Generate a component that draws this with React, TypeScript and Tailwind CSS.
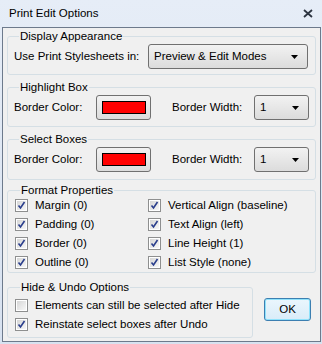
import React from 'react';

const font = { fontFamily: '"Liberation Sans", Arial, sans-serif' };

const Arrow = () => (
  <svg width="7" height="4" viewBox="0 0 7 4" className="shrink-0">
    <path d="M0 0H7L3.5 4Z" fill="#000" />
  </svg>
);

const Select = ({ value, className }: { value: string; className: string }) => (
  <div
    className={`h-[25px] flex items-center justify-between pl-[5px] pr-[9px] rounded-[3px] border border-[#707070] bg-gradient-to-b from-[#f2f2f2] to-[#dcdcdc] ${className}`}
  >
    <span>{value}</span>
    <Arrow />
  </div>
);

const ColorButton = () => (
  <div className="w-[55px] h-[25px] flex items-center justify-center rounded-[3px] border border-[#707070] bg-gradient-to-b from-[#f2f2f2] to-[#dcdcdc]">
    <div className="w-[44px] h-[13px] bg-[#ff0000] border border-black" />
  </div>
);

const Check = ({ checked = true }: { checked?: boolean }) => (
  <div className="w-[13px] h-[13px] border border-[#8e8f8f] bg-white p-[1px] shrink-0">
    <div className="w-full h-full bg-gradient-to-br from-[#d6d6d6] to-[#f7f7f7] flex items-center justify-center">
      {checked && (
        <svg width="9" height="9" viewBox="0 0 9 9">
          <path d="M1.5 4.5L3.5 7L7.5 1" fill="none" stroke="#2a3e8c" strokeWidth="1.6" />
        </svg>
      )}
    </div>
  </div>
);

const CheckRow = ({ label, checked = true }: { label: string; checked?: boolean }) => (
  <div className="h-[19px] flex items-center gap-[7px] whitespace-nowrap">
    <Check checked={checked} />
    <span>{label}</span>
  </div>
);

const Group = ({ title, className = '', children }: { title: string; className?: string; children: React.ReactNode }) => (
  <fieldset className={`border border-[#d5dfe5] rounded-[3px] px-[6px] ${className}`}>
    <legend className="ml-[5px] px-[1px] leading-[15px]">{title}</legend>
    {children}
  </fieldset>
);

const BorderRow = () => (
  <div className="flex items-center">
    <span className="w-[82px]">Border Color:</span>
    <ColorButton />
    <span className="ml-[21px] w-[82px]">Border Width:</span>
    <Select value="1" className="w-[55px]" />
  </div>
);

export default function App() {
  return (
    <div
      className="w-[322px] h-[344px] flex flex-col bg-gradient-to-b from-[#e6edf7] to-[#d8e2f0] text-[11.5px] text-black"
      style={font}
    >
      <div className="h-[27px] shrink-0 flex items-center justify-between pl-[9px] pr-[9px]">
        <span>Print Edit Options</span>
        <svg width="10" height="9" viewBox="0 0 10 9">
          <path d="M1 1L9 8M9 1L1 8" stroke="#2c3440" strokeWidth="1.8" />
        </svg>
      </div>
      <div className="flex-1 min-h-0 ml-[2px] mr-[1px] mb-[2px] border border-[#6d7a8c] bg-[#f0f0f0] px-[4px] pt-[1px] flex flex-col overflow-hidden">
        <Group title="Display Appearance" className="pb-[5px]">
          <div className="flex items-center justify-between pr-[1px]">
            <span>Use Print Stylesheets in:</span>
            <Select value="Preview & Edit Modes" className="w-[160px]" />
          </div>
        </Group>
        <Group title="Highlight Box" className="mt-[5px] pb-[6px]">
          <BorderRow />
        </Group>
        <Group title="Select Boxes" className="mt-[5px] pb-[7px]">
          <BorderRow />
        </Group>
        <Group title="Format Properties" className="mt-[3px] pl-[7px]">
          <div className="grid grid-cols-[133px_1fr] -mt-[2px]">
            <CheckRow label="Margin (0)" />
            <CheckRow label="Vertical Align (baseline)" />
            <CheckRow label="Padding (0)" />
            <CheckRow label="Text Align (left)" />
            <CheckRow label="Border (0)" />
            <CheckRow label="Line Height (1)" />
            <CheckRow label="Outline (0)" />
            <CheckRow label="List Style (none)" />
          </div>
        </Group>
        <div className="flex items-start mt-[7px]">
          <Group title="Hide & Undo Options" className="w-[246px] pb-[3px] pl-[7px]">
            <div className="mt-[1px]">
              <CheckRow label="Elements can still be selected after Hide" checked={false} />
              <CheckRow label="Reinstate select boxes after Undo" />
            </div>
          </Group>
          <div className="ml-[11px] mt-[18px] w-[47px] h-[23px] flex items-center justify-center rounded-[3px] border border-[#3c7fb1] shadow-[inset_0_0_0_1px_#8fe2fb] bg-gradient-to-b from-[#eaf6fd] to-[#d9ecf8]">
            OK
          </div>
        </div>
      </div>
    </div>
  );
}
